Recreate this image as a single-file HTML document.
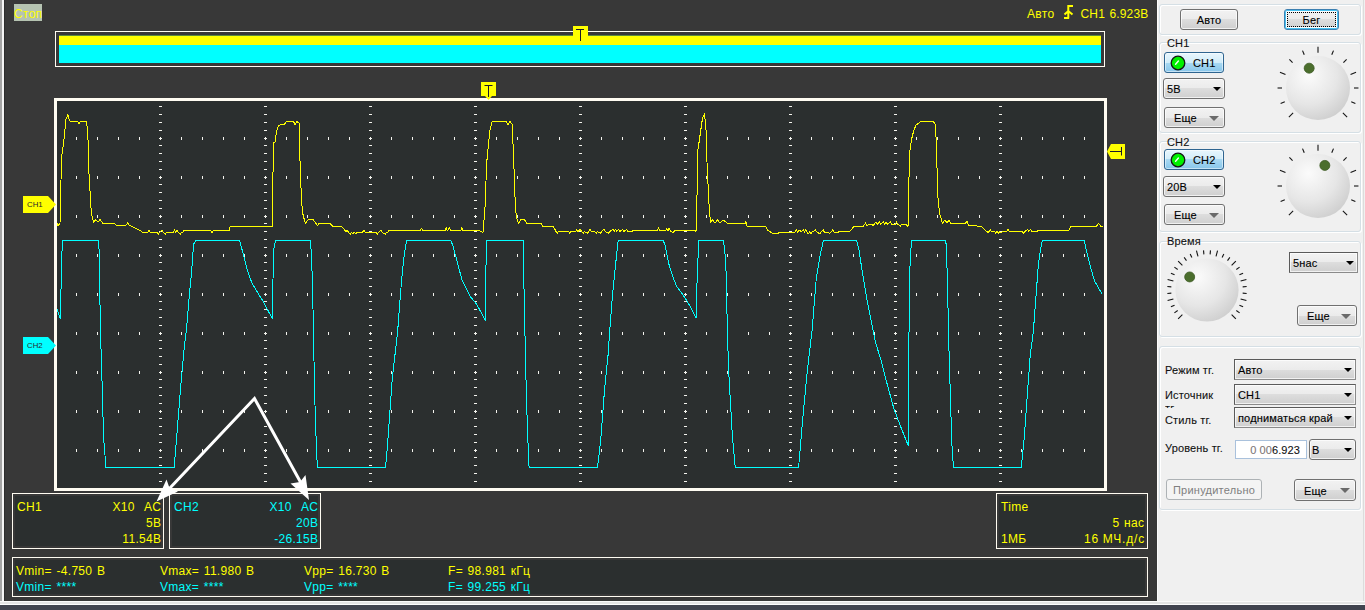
<!DOCTYPE html><html><head><meta charset="utf-8"><style>
*{box-sizing:border-box}
body{margin:0;width:1365px;height:610px;position:relative;overflow:hidden;background:#383838;font-family:"Liberation Sans",sans-serif}
.a{position:absolute}
.t{position:absolute;white-space:nowrap;font-size:12px;line-height:14px;letter-spacing:0.3px;word-spacing:1px}
.box{position:absolute;border:1px solid #fffcf2;background:#383838}
.fill{position:absolute;background:#2b2f2f}
.p{position:absolute;font-size:11px;line-height:13px;color:#111;white-space:nowrap;letter-spacing:0.15px;-webkit-text-stroke:0.1px currentColor}
.grp{position:absolute;border:1px solid #d5dfe5;border-radius:3px;box-shadow:inset 1px 1px 0 #fff, 1px 1px 0 #fff}
.btn{position:absolute;border:1px solid #707070;border-radius:3px;background:linear-gradient(#f2f2f2 0,#ebebeb 50%,#dddddd 50%,#cfcfcf 100%);box-shadow:inset 0 0 0 1px rgba(255,255,255,.7);font-size:11px;color:#000;text-align:center;padding-top:1px;letter-spacing:0.15px;-webkit-text-stroke:0.1px #000}
.cmb{position:absolute;border:1px solid #707070;border-radius:3px;background:linear-gradient(#f2f2f2 0,#ebebeb 50%,#dddddd 50%,#cfcfcf 100%);box-shadow:inset 0 0 0 1px rgba(255,255,255,.7);font-size:11px;color:#000;padding-top:1px;letter-spacing:0.15px;-webkit-text-stroke:0.1px #000}
.arr{position:absolute;width:0;height:0;border-left:4px solid transparent;border-right:4px solid transparent;border-top:4px solid #000}
</style></head><body><div class="a" style="left:0;top:0;width:2px;height:601px;background:#a4a4a4"></div><div class="a" style="left:2px;top:0;width:2px;height:601px;background:#f4f4f4"></div><div class="a" style="left:4px;top:0;width:1px;height:601px;background:#2c2c2c"></div><div class="a" style="left:0;top:601px;width:1365px;height:4px;background:#e4e4e4;border-top:1px solid #fafafa;border-bottom:1px solid #fdfdfd"></div><div class="a" style="left:0;top:605px;width:1365px;height:5px;background:#41444f"></div><div class="a" style="left:14px;top:4px;width:28px;height:17px;background:#b5c3b1"></div><div class="t" style="left:14px;top:7px;color:#ffff00;font-size:12px;">Стоп</div><div class="t" style="left:1027px;top:7px;color:#ffff00;font-size:12px;">Авто</div><div class="t" style="left:1080.5px;top:7px;color:#ffff00;font-size:12px;letter-spacing:0.15px">CH1 6.923В</div><div class="box" style="left:12px;top:493px;width:152px;height:56px"></div><div class="fill" style="left:15px;top:496px;width:146px;height:50px"></div><div class="box" style="left:169px;top:493px;width:152px;height:56px"></div><div class="fill" style="left:172px;top:496px;width:146px;height:50px"></div><div class="box" style="left:996px;top:493px;width:152px;height:56px"></div><div class="fill" style="left:999px;top:496px;width:146px;height:50px"></div><div class="box" style="left:12px;top:557px;width:1136px;height:40px"></div><div class="fill" style="left:15px;top:560px;width:1130px;height:34px"></div><div class="t" style="left:17px;top:500px;color:#ffff00;font-size:12px;">CH1</div><div class="t" style="right:1203.7px;top:500px;color:#ffff00;font-size:12px;text-align:right;">X10&nbsp;&nbsp;AC</div><div class="t" style="right:1203.7px;top:516px;color:#ffff00;font-size:12px;text-align:right;">5В</div><div class="t" style="right:1203.7px;top:532px;color:#ffff00;font-size:12px;text-align:right;">11.54В</div><div class="t" style="left:174px;top:500px;color:#00ffff;font-size:12px;">CH2</div><div class="t" style="right:1046.7px;top:500px;color:#00ffff;font-size:12px;text-align:right;">X10&nbsp;&nbsp;AC</div><div class="t" style="right:1046.7px;top:516px;color:#00ffff;font-size:12px;text-align:right;">20В</div><div class="t" style="right:1046.7px;top:532px;color:#00ffff;font-size:12px;text-align:right;">-26.15В</div><div class="t" style="left:1001px;top:500px;color:#ffff00;font-size:12px;">Time</div><div class="t" style="right:220.70000000000005px;top:516px;color:#ffff00;font-size:12px;text-align:right;">5 нас</div><div class="t" style="left:1001px;top:532px;color:#ffff00;font-size:12px;">1МБ</div><div class="t" style="right:220px;top:532px;color:#ffff00;font-size:12px;text-align:right;letter-spacing:0.8px;word-spacing:-0.5px">16 МЧ.д/с</div><div class="t" style="left:16px;top:564px;color:#ffff00;font-size:12px;">Vmin= -4.750 В</div><div class="t" style="left:160px;top:564px;color:#ffff00;font-size:12px;">Vmax= 11.980 В</div><div class="t" style="left:304px;top:564px;color:#ffff00;font-size:12px;">Vpp= 16.730 В</div><div class="t" style="left:448px;top:564px;color:#ffff00;font-size:12px;">F= 98.981 кГц</div><div class="t" style="left:16px;top:580px;color:#00ffff;font-size:12px;">Vmin= ****</div><div class="t" style="left:160px;top:580px;color:#00ffff;font-size:12px;">Vmax= ****</div><div class="t" style="left:304px;top:580px;color:#00ffff;font-size:12px;">Vpp= ****</div><div class="t" style="left:448px;top:580px;color:#00ffff;font-size:12px;">F= 99.255 кГц</div><svg width="1365" height="610" style="position:absolute;left:0;top:0"><rect x="55.5" y="31.5" width="1049" height="35" fill="none" stroke="#fffcf2" stroke-width="1"/><rect x="59" y="35" width="1042" height="1" fill="#5a8a40"/><rect x="59" y="36" width="1042" height="9" fill="#ffff00"/><rect x="59" y="45" width="1042" height="18" fill="#00ffff"/><rect x="573" y="26" width="15" height="10" fill="#ffff00"/><path d="M576,29.5 H584 M580.5,29.5 V41" stroke="#1a1a2a" stroke-width="1" fill="none"/><rect x="55.5" y="99.5" width="1050" height="390" fill="#2b2f2f" stroke="#fffcf2" stroke-width="3"/><g fill="#f4f4ee" shape-rendering="crispEdges"><rect x="76" y="137" width="1" height="3"/><rect x="97" y="137" width="1" height="3"/><rect x="118" y="137" width="1" height="3"/><rect x="139" y="137" width="1" height="3"/><rect x="181" y="137" width="1" height="3"/><rect x="202" y="137" width="1" height="3"/><rect x="223" y="137" width="1" height="3"/><rect x="244" y="137" width="1" height="3"/><rect x="286" y="137" width="1" height="3"/><rect x="307" y="137" width="1" height="3"/><rect x="328" y="137" width="1" height="3"/><rect x="349" y="137" width="1" height="3"/><rect x="391" y="137" width="1" height="3"/><rect x="412" y="137" width="1" height="3"/><rect x="433" y="137" width="1" height="3"/><rect x="454" y="137" width="1" height="3"/><rect x="496" y="137" width="1" height="3"/><rect x="517" y="137" width="1" height="3"/><rect x="538" y="137" width="1" height="3"/><rect x="559" y="137" width="1" height="3"/><rect x="601" y="137" width="1" height="3"/><rect x="622" y="137" width="1" height="3"/><rect x="643" y="137" width="1" height="3"/><rect x="664" y="137" width="1" height="3"/><rect x="706" y="137" width="1" height="3"/><rect x="727" y="137" width="1" height="3"/><rect x="748" y="137" width="1" height="3"/><rect x="769" y="137" width="1" height="3"/><rect x="811" y="137" width="1" height="3"/><rect x="832" y="137" width="1" height="3"/><rect x="853" y="137" width="1" height="3"/><rect x="874" y="137" width="1" height="3"/><rect x="916" y="137" width="1" height="3"/><rect x="937" y="137" width="1" height="3"/><rect x="958" y="137" width="1" height="3"/><rect x="979" y="137" width="1" height="3"/><rect x="1021" y="137" width="1" height="3"/><rect x="1042" y="137" width="1" height="3"/><rect x="1063" y="137" width="1" height="3"/><rect x="1084" y="137" width="1" height="3"/><rect x="76" y="176" width="1" height="3"/><rect x="97" y="176" width="1" height="3"/><rect x="118" y="176" width="1" height="3"/><rect x="139" y="176" width="1" height="3"/><rect x="181" y="176" width="1" height="3"/><rect x="202" y="176" width="1" height="3"/><rect x="223" y="176" width="1" height="3"/><rect x="244" y="176" width="1" height="3"/><rect x="286" y="176" width="1" height="3"/><rect x="307" y="176" width="1" height="3"/><rect x="328" y="176" width="1" height="3"/><rect x="349" y="176" width="1" height="3"/><rect x="391" y="176" width="1" height="3"/><rect x="412" y="176" width="1" height="3"/><rect x="433" y="176" width="1" height="3"/><rect x="454" y="176" width="1" height="3"/><rect x="496" y="176" width="1" height="3"/><rect x="517" y="176" width="1" height="3"/><rect x="538" y="176" width="1" height="3"/><rect x="559" y="176" width="1" height="3"/><rect x="601" y="176" width="1" height="3"/><rect x="622" y="176" width="1" height="3"/><rect x="643" y="176" width="1" height="3"/><rect x="664" y="176" width="1" height="3"/><rect x="706" y="176" width="1" height="3"/><rect x="727" y="176" width="1" height="3"/><rect x="748" y="176" width="1" height="3"/><rect x="769" y="176" width="1" height="3"/><rect x="811" y="176" width="1" height="3"/><rect x="832" y="176" width="1" height="3"/><rect x="853" y="176" width="1" height="3"/><rect x="874" y="176" width="1" height="3"/><rect x="916" y="176" width="1" height="3"/><rect x="937" y="176" width="1" height="3"/><rect x="958" y="176" width="1" height="3"/><rect x="979" y="176" width="1" height="3"/><rect x="1021" y="176" width="1" height="3"/><rect x="1042" y="176" width="1" height="3"/><rect x="1063" y="176" width="1" height="3"/><rect x="1084" y="176" width="1" height="3"/><rect x="76" y="215" width="1" height="3"/><rect x="97" y="215" width="1" height="3"/><rect x="118" y="215" width="1" height="3"/><rect x="139" y="215" width="1" height="3"/><rect x="181" y="215" width="1" height="3"/><rect x="202" y="215" width="1" height="3"/><rect x="223" y="215" width="1" height="3"/><rect x="244" y="215" width="1" height="3"/><rect x="286" y="215" width="1" height="3"/><rect x="307" y="215" width="1" height="3"/><rect x="328" y="215" width="1" height="3"/><rect x="349" y="215" width="1" height="3"/><rect x="391" y="215" width="1" height="3"/><rect x="412" y="215" width="1" height="3"/><rect x="433" y="215" width="1" height="3"/><rect x="454" y="215" width="1" height="3"/><rect x="496" y="215" width="1" height="3"/><rect x="517" y="215" width="1" height="3"/><rect x="538" y="215" width="1" height="3"/><rect x="559" y="215" width="1" height="3"/><rect x="601" y="215" width="1" height="3"/><rect x="622" y="215" width="1" height="3"/><rect x="643" y="215" width="1" height="3"/><rect x="664" y="215" width="1" height="3"/><rect x="706" y="215" width="1" height="3"/><rect x="727" y="215" width="1" height="3"/><rect x="748" y="215" width="1" height="3"/><rect x="769" y="215" width="1" height="3"/><rect x="811" y="215" width="1" height="3"/><rect x="832" y="215" width="1" height="3"/><rect x="853" y="215" width="1" height="3"/><rect x="874" y="215" width="1" height="3"/><rect x="916" y="215" width="1" height="3"/><rect x="937" y="215" width="1" height="3"/><rect x="958" y="215" width="1" height="3"/><rect x="979" y="215" width="1" height="3"/><rect x="1021" y="215" width="1" height="3"/><rect x="1042" y="215" width="1" height="3"/><rect x="1063" y="215" width="1" height="3"/><rect x="1084" y="215" width="1" height="3"/><rect x="76" y="254" width="1" height="3"/><rect x="97" y="254" width="1" height="3"/><rect x="118" y="254" width="1" height="3"/><rect x="139" y="254" width="1" height="3"/><rect x="181" y="254" width="1" height="3"/><rect x="202" y="254" width="1" height="3"/><rect x="223" y="254" width="1" height="3"/><rect x="244" y="254" width="1" height="3"/><rect x="286" y="254" width="1" height="3"/><rect x="307" y="254" width="1" height="3"/><rect x="328" y="254" width="1" height="3"/><rect x="349" y="254" width="1" height="3"/><rect x="391" y="254" width="1" height="3"/><rect x="412" y="254" width="1" height="3"/><rect x="433" y="254" width="1" height="3"/><rect x="454" y="254" width="1" height="3"/><rect x="496" y="254" width="1" height="3"/><rect x="517" y="254" width="1" height="3"/><rect x="538" y="254" width="1" height="3"/><rect x="559" y="254" width="1" height="3"/><rect x="601" y="254" width="1" height="3"/><rect x="622" y="254" width="1" height="3"/><rect x="643" y="254" width="1" height="3"/><rect x="664" y="254" width="1" height="3"/><rect x="706" y="254" width="1" height="3"/><rect x="727" y="254" width="1" height="3"/><rect x="748" y="254" width="1" height="3"/><rect x="769" y="254" width="1" height="3"/><rect x="811" y="254" width="1" height="3"/><rect x="832" y="254" width="1" height="3"/><rect x="853" y="254" width="1" height="3"/><rect x="874" y="254" width="1" height="3"/><rect x="916" y="254" width="1" height="3"/><rect x="937" y="254" width="1" height="3"/><rect x="958" y="254" width="1" height="3"/><rect x="979" y="254" width="1" height="3"/><rect x="1021" y="254" width="1" height="3"/><rect x="1042" y="254" width="1" height="3"/><rect x="1063" y="254" width="1" height="3"/><rect x="1084" y="254" width="1" height="3"/><rect x="76" y="293" width="1" height="3"/><rect x="97" y="293" width="1" height="3"/><rect x="118" y="293" width="1" height="3"/><rect x="139" y="293" width="1" height="3"/><rect x="181" y="293" width="1" height="3"/><rect x="202" y="293" width="1" height="3"/><rect x="223" y="293" width="1" height="3"/><rect x="244" y="293" width="1" height="3"/><rect x="286" y="293" width="1" height="3"/><rect x="307" y="293" width="1" height="3"/><rect x="328" y="293" width="1" height="3"/><rect x="349" y="293" width="1" height="3"/><rect x="391" y="293" width="1" height="3"/><rect x="412" y="293" width="1" height="3"/><rect x="433" y="293" width="1" height="3"/><rect x="454" y="293" width="1" height="3"/><rect x="496" y="293" width="1" height="3"/><rect x="517" y="293" width="1" height="3"/><rect x="538" y="293" width="1" height="3"/><rect x="559" y="293" width="1" height="3"/><rect x="601" y="293" width="1" height="3"/><rect x="622" y="293" width="1" height="3"/><rect x="643" y="293" width="1" height="3"/><rect x="664" y="293" width="1" height="3"/><rect x="706" y="293" width="1" height="3"/><rect x="727" y="293" width="1" height="3"/><rect x="748" y="293" width="1" height="3"/><rect x="769" y="293" width="1" height="3"/><rect x="811" y="293" width="1" height="3"/><rect x="832" y="293" width="1" height="3"/><rect x="853" y="293" width="1" height="3"/><rect x="874" y="293" width="1" height="3"/><rect x="916" y="293" width="1" height="3"/><rect x="937" y="293" width="1" height="3"/><rect x="958" y="293" width="1" height="3"/><rect x="979" y="293" width="1" height="3"/><rect x="1021" y="293" width="1" height="3"/><rect x="1042" y="293" width="1" height="3"/><rect x="1063" y="293" width="1" height="3"/><rect x="1084" y="293" width="1" height="3"/><rect x="76" y="332" width="1" height="3"/><rect x="97" y="332" width="1" height="3"/><rect x="118" y="332" width="1" height="3"/><rect x="139" y="332" width="1" height="3"/><rect x="181" y="332" width="1" height="3"/><rect x="202" y="332" width="1" height="3"/><rect x="223" y="332" width="1" height="3"/><rect x="244" y="332" width="1" height="3"/><rect x="286" y="332" width="1" height="3"/><rect x="307" y="332" width="1" height="3"/><rect x="328" y="332" width="1" height="3"/><rect x="349" y="332" width="1" height="3"/><rect x="391" y="332" width="1" height="3"/><rect x="412" y="332" width="1" height="3"/><rect x="433" y="332" width="1" height="3"/><rect x="454" y="332" width="1" height="3"/><rect x="496" y="332" width="1" height="3"/><rect x="517" y="332" width="1" height="3"/><rect x="538" y="332" width="1" height="3"/><rect x="559" y="332" width="1" height="3"/><rect x="601" y="332" width="1" height="3"/><rect x="622" y="332" width="1" height="3"/><rect x="643" y="332" width="1" height="3"/><rect x="664" y="332" width="1" height="3"/><rect x="706" y="332" width="1" height="3"/><rect x="727" y="332" width="1" height="3"/><rect x="748" y="332" width="1" height="3"/><rect x="769" y="332" width="1" height="3"/><rect x="811" y="332" width="1" height="3"/><rect x="832" y="332" width="1" height="3"/><rect x="853" y="332" width="1" height="3"/><rect x="874" y="332" width="1" height="3"/><rect x="916" y="332" width="1" height="3"/><rect x="937" y="332" width="1" height="3"/><rect x="958" y="332" width="1" height="3"/><rect x="979" y="332" width="1" height="3"/><rect x="1021" y="332" width="1" height="3"/><rect x="1042" y="332" width="1" height="3"/><rect x="1063" y="332" width="1" height="3"/><rect x="1084" y="332" width="1" height="3"/><rect x="76" y="371" width="1" height="3"/><rect x="97" y="371" width="1" height="3"/><rect x="118" y="371" width="1" height="3"/><rect x="139" y="371" width="1" height="3"/><rect x="181" y="371" width="1" height="3"/><rect x="202" y="371" width="1" height="3"/><rect x="223" y="371" width="1" height="3"/><rect x="244" y="371" width="1" height="3"/><rect x="286" y="371" width="1" height="3"/><rect x="307" y="371" width="1" height="3"/><rect x="328" y="371" width="1" height="3"/><rect x="349" y="371" width="1" height="3"/><rect x="391" y="371" width="1" height="3"/><rect x="412" y="371" width="1" height="3"/><rect x="433" y="371" width="1" height="3"/><rect x="454" y="371" width="1" height="3"/><rect x="496" y="371" width="1" height="3"/><rect x="517" y="371" width="1" height="3"/><rect x="538" y="371" width="1" height="3"/><rect x="559" y="371" width="1" height="3"/><rect x="601" y="371" width="1" height="3"/><rect x="622" y="371" width="1" height="3"/><rect x="643" y="371" width="1" height="3"/><rect x="664" y="371" width="1" height="3"/><rect x="706" y="371" width="1" height="3"/><rect x="727" y="371" width="1" height="3"/><rect x="748" y="371" width="1" height="3"/><rect x="769" y="371" width="1" height="3"/><rect x="811" y="371" width="1" height="3"/><rect x="832" y="371" width="1" height="3"/><rect x="853" y="371" width="1" height="3"/><rect x="874" y="371" width="1" height="3"/><rect x="916" y="371" width="1" height="3"/><rect x="937" y="371" width="1" height="3"/><rect x="958" y="371" width="1" height="3"/><rect x="979" y="371" width="1" height="3"/><rect x="1021" y="371" width="1" height="3"/><rect x="1042" y="371" width="1" height="3"/><rect x="1063" y="371" width="1" height="3"/><rect x="1084" y="371" width="1" height="3"/><rect x="76" y="410" width="1" height="3"/><rect x="97" y="410" width="1" height="3"/><rect x="118" y="410" width="1" height="3"/><rect x="139" y="410" width="1" height="3"/><rect x="181" y="410" width="1" height="3"/><rect x="202" y="410" width="1" height="3"/><rect x="223" y="410" width="1" height="3"/><rect x="244" y="410" width="1" height="3"/><rect x="286" y="410" width="1" height="3"/><rect x="307" y="410" width="1" height="3"/><rect x="328" y="410" width="1" height="3"/><rect x="349" y="410" width="1" height="3"/><rect x="391" y="410" width="1" height="3"/><rect x="412" y="410" width="1" height="3"/><rect x="433" y="410" width="1" height="3"/><rect x="454" y="410" width="1" height="3"/><rect x="496" y="410" width="1" height="3"/><rect x="517" y="410" width="1" height="3"/><rect x="538" y="410" width="1" height="3"/><rect x="559" y="410" width="1" height="3"/><rect x="601" y="410" width="1" height="3"/><rect x="622" y="410" width="1" height="3"/><rect x="643" y="410" width="1" height="3"/><rect x="664" y="410" width="1" height="3"/><rect x="706" y="410" width="1" height="3"/><rect x="727" y="410" width="1" height="3"/><rect x="748" y="410" width="1" height="3"/><rect x="769" y="410" width="1" height="3"/><rect x="811" y="410" width="1" height="3"/><rect x="832" y="410" width="1" height="3"/><rect x="853" y="410" width="1" height="3"/><rect x="874" y="410" width="1" height="3"/><rect x="916" y="410" width="1" height="3"/><rect x="937" y="410" width="1" height="3"/><rect x="958" y="410" width="1" height="3"/><rect x="979" y="410" width="1" height="3"/><rect x="1021" y="410" width="1" height="3"/><rect x="1042" y="410" width="1" height="3"/><rect x="1063" y="410" width="1" height="3"/><rect x="1084" y="410" width="1" height="3"/><rect x="76" y="449" width="1" height="3"/><rect x="97" y="449" width="1" height="3"/><rect x="118" y="449" width="1" height="3"/><rect x="139" y="449" width="1" height="3"/><rect x="181" y="449" width="1" height="3"/><rect x="202" y="449" width="1" height="3"/><rect x="223" y="449" width="1" height="3"/><rect x="244" y="449" width="1" height="3"/><rect x="286" y="449" width="1" height="3"/><rect x="307" y="449" width="1" height="3"/><rect x="328" y="449" width="1" height="3"/><rect x="349" y="449" width="1" height="3"/><rect x="391" y="449" width="1" height="3"/><rect x="412" y="449" width="1" height="3"/><rect x="433" y="449" width="1" height="3"/><rect x="454" y="449" width="1" height="3"/><rect x="496" y="449" width="1" height="3"/><rect x="517" y="449" width="1" height="3"/><rect x="538" y="449" width="1" height="3"/><rect x="559" y="449" width="1" height="3"/><rect x="601" y="449" width="1" height="3"/><rect x="622" y="449" width="1" height="3"/><rect x="643" y="449" width="1" height="3"/><rect x="664" y="449" width="1" height="3"/><rect x="706" y="449" width="1" height="3"/><rect x="727" y="449" width="1" height="3"/><rect x="748" y="449" width="1" height="3"/><rect x="769" y="449" width="1" height="3"/><rect x="811" y="449" width="1" height="3"/><rect x="832" y="449" width="1" height="3"/><rect x="853" y="449" width="1" height="3"/><rect x="874" y="449" width="1" height="3"/><rect x="916" y="449" width="1" height="3"/><rect x="937" y="449" width="1" height="3"/><rect x="958" y="449" width="1" height="3"/><rect x="979" y="449" width="1" height="3"/><rect x="1021" y="449" width="1" height="3"/><rect x="1042" y="449" width="1" height="3"/><rect x="1063" y="449" width="1" height="3"/><rect x="1084" y="449" width="1" height="3"/><rect x="159" y="106" width="3" height="1"/><rect x="159" y="114" width="3" height="1"/><rect x="159" y="122" width="3" height="1"/><rect x="159" y="130" width="3" height="1"/><rect x="159" y="145" width="3" height="1"/><rect x="159" y="153" width="3" height="1"/><rect x="159" y="161" width="3" height="1"/><rect x="159" y="169" width="3" height="1"/><rect x="159" y="184" width="3" height="1"/><rect x="159" y="192" width="3" height="1"/><rect x="159" y="200" width="3" height="1"/><rect x="159" y="208" width="3" height="1"/><rect x="159" y="223" width="3" height="1"/><rect x="159" y="231" width="3" height="1"/><rect x="159" y="239" width="3" height="1"/><rect x="159" y="247" width="3" height="1"/><rect x="159" y="262" width="3" height="1"/><rect x="159" y="270" width="3" height="1"/><rect x="159" y="278" width="3" height="1"/><rect x="159" y="286" width="3" height="1"/><rect x="159" y="301" width="3" height="1"/><rect x="159" y="309" width="3" height="1"/><rect x="159" y="317" width="3" height="1"/><rect x="159" y="325" width="3" height="1"/><rect x="159" y="340" width="3" height="1"/><rect x="159" y="348" width="3" height="1"/><rect x="159" y="356" width="3" height="1"/><rect x="159" y="364" width="3" height="1"/><rect x="159" y="379" width="3" height="1"/><rect x="159" y="387" width="3" height="1"/><rect x="159" y="395" width="3" height="1"/><rect x="159" y="403" width="3" height="1"/><rect x="159" y="418" width="3" height="1"/><rect x="159" y="426" width="3" height="1"/><rect x="159" y="434" width="3" height="1"/><rect x="159" y="442" width="3" height="1"/><rect x="159" y="457" width="3" height="1"/><rect x="159" y="465" width="3" height="1"/><rect x="159" y="473" width="3" height="1"/><rect x="159" y="481" width="3" height="1"/><rect x="264" y="106" width="3" height="1"/><rect x="264" y="114" width="3" height="1"/><rect x="264" y="122" width="3" height="1"/><rect x="264" y="130" width="3" height="1"/><rect x="264" y="145" width="3" height="1"/><rect x="264" y="153" width="3" height="1"/><rect x="264" y="161" width="3" height="1"/><rect x="264" y="169" width="3" height="1"/><rect x="264" y="184" width="3" height="1"/><rect x="264" y="192" width="3" height="1"/><rect x="264" y="200" width="3" height="1"/><rect x="264" y="208" width="3" height="1"/><rect x="264" y="223" width="3" height="1"/><rect x="264" y="231" width="3" height="1"/><rect x="264" y="239" width="3" height="1"/><rect x="264" y="247" width="3" height="1"/><rect x="264" y="262" width="3" height="1"/><rect x="264" y="270" width="3" height="1"/><rect x="264" y="278" width="3" height="1"/><rect x="264" y="286" width="3" height="1"/><rect x="264" y="301" width="3" height="1"/><rect x="264" y="309" width="3" height="1"/><rect x="264" y="317" width="3" height="1"/><rect x="264" y="325" width="3" height="1"/><rect x="264" y="340" width="3" height="1"/><rect x="264" y="348" width="3" height="1"/><rect x="264" y="356" width="3" height="1"/><rect x="264" y="364" width="3" height="1"/><rect x="264" y="379" width="3" height="1"/><rect x="264" y="387" width="3" height="1"/><rect x="264" y="395" width="3" height="1"/><rect x="264" y="403" width="3" height="1"/><rect x="264" y="418" width="3" height="1"/><rect x="264" y="426" width="3" height="1"/><rect x="264" y="434" width="3" height="1"/><rect x="264" y="442" width="3" height="1"/><rect x="264" y="457" width="3" height="1"/><rect x="264" y="465" width="3" height="1"/><rect x="264" y="473" width="3" height="1"/><rect x="264" y="481" width="3" height="1"/><rect x="369" y="106" width="3" height="1"/><rect x="369" y="114" width="3" height="1"/><rect x="369" y="122" width="3" height="1"/><rect x="369" y="130" width="3" height="1"/><rect x="369" y="145" width="3" height="1"/><rect x="369" y="153" width="3" height="1"/><rect x="369" y="161" width="3" height="1"/><rect x="369" y="169" width="3" height="1"/><rect x="369" y="184" width="3" height="1"/><rect x="369" y="192" width="3" height="1"/><rect x="369" y="200" width="3" height="1"/><rect x="369" y="208" width="3" height="1"/><rect x="369" y="223" width="3" height="1"/><rect x="369" y="231" width="3" height="1"/><rect x="369" y="239" width="3" height="1"/><rect x="369" y="247" width="3" height="1"/><rect x="369" y="262" width="3" height="1"/><rect x="369" y="270" width="3" height="1"/><rect x="369" y="278" width="3" height="1"/><rect x="369" y="286" width="3" height="1"/><rect x="369" y="301" width="3" height="1"/><rect x="369" y="309" width="3" height="1"/><rect x="369" y="317" width="3" height="1"/><rect x="369" y="325" width="3" height="1"/><rect x="369" y="340" width="3" height="1"/><rect x="369" y="348" width="3" height="1"/><rect x="369" y="356" width="3" height="1"/><rect x="369" y="364" width="3" height="1"/><rect x="369" y="379" width="3" height="1"/><rect x="369" y="387" width="3" height="1"/><rect x="369" y="395" width="3" height="1"/><rect x="369" y="403" width="3" height="1"/><rect x="369" y="418" width="3" height="1"/><rect x="369" y="426" width="3" height="1"/><rect x="369" y="434" width="3" height="1"/><rect x="369" y="442" width="3" height="1"/><rect x="369" y="457" width="3" height="1"/><rect x="369" y="465" width="3" height="1"/><rect x="369" y="473" width="3" height="1"/><rect x="369" y="481" width="3" height="1"/><rect x="474" y="106" width="3" height="1"/><rect x="474" y="114" width="3" height="1"/><rect x="474" y="122" width="3" height="1"/><rect x="474" y="130" width="3" height="1"/><rect x="474" y="145" width="3" height="1"/><rect x="474" y="153" width="3" height="1"/><rect x="474" y="161" width="3" height="1"/><rect x="474" y="169" width="3" height="1"/><rect x="474" y="184" width="3" height="1"/><rect x="474" y="192" width="3" height="1"/><rect x="474" y="200" width="3" height="1"/><rect x="474" y="208" width="3" height="1"/><rect x="474" y="223" width="3" height="1"/><rect x="474" y="231" width="3" height="1"/><rect x="474" y="239" width="3" height="1"/><rect x="474" y="247" width="3" height="1"/><rect x="474" y="262" width="3" height="1"/><rect x="474" y="270" width="3" height="1"/><rect x="474" y="278" width="3" height="1"/><rect x="474" y="286" width="3" height="1"/><rect x="474" y="301" width="3" height="1"/><rect x="474" y="309" width="3" height="1"/><rect x="474" y="317" width="3" height="1"/><rect x="474" y="325" width="3" height="1"/><rect x="474" y="340" width="3" height="1"/><rect x="474" y="348" width="3" height="1"/><rect x="474" y="356" width="3" height="1"/><rect x="474" y="364" width="3" height="1"/><rect x="474" y="379" width="3" height="1"/><rect x="474" y="387" width="3" height="1"/><rect x="474" y="395" width="3" height="1"/><rect x="474" y="403" width="3" height="1"/><rect x="474" y="418" width="3" height="1"/><rect x="474" y="426" width="3" height="1"/><rect x="474" y="434" width="3" height="1"/><rect x="474" y="442" width="3" height="1"/><rect x="474" y="457" width="3" height="1"/><rect x="474" y="465" width="3" height="1"/><rect x="474" y="473" width="3" height="1"/><rect x="474" y="481" width="3" height="1"/><rect x="579" y="106" width="3" height="1"/><rect x="579" y="114" width="3" height="1"/><rect x="579" y="122" width="3" height="1"/><rect x="579" y="130" width="3" height="1"/><rect x="579" y="145" width="3" height="1"/><rect x="579" y="153" width="3" height="1"/><rect x="579" y="161" width="3" height="1"/><rect x="579" y="169" width="3" height="1"/><rect x="579" y="184" width="3" height="1"/><rect x="579" y="192" width="3" height="1"/><rect x="579" y="200" width="3" height="1"/><rect x="579" y="208" width="3" height="1"/><rect x="579" y="223" width="3" height="1"/><rect x="579" y="231" width="3" height="1"/><rect x="579" y="239" width="3" height="1"/><rect x="579" y="247" width="3" height="1"/><rect x="579" y="262" width="3" height="1"/><rect x="579" y="270" width="3" height="1"/><rect x="579" y="278" width="3" height="1"/><rect x="579" y="286" width="3" height="1"/><rect x="579" y="301" width="3" height="1"/><rect x="579" y="309" width="3" height="1"/><rect x="579" y="317" width="3" height="1"/><rect x="579" y="325" width="3" height="1"/><rect x="579" y="340" width="3" height="1"/><rect x="579" y="348" width="3" height="1"/><rect x="579" y="356" width="3" height="1"/><rect x="579" y="364" width="3" height="1"/><rect x="579" y="379" width="3" height="1"/><rect x="579" y="387" width="3" height="1"/><rect x="579" y="395" width="3" height="1"/><rect x="579" y="403" width="3" height="1"/><rect x="579" y="418" width="3" height="1"/><rect x="579" y="426" width="3" height="1"/><rect x="579" y="434" width="3" height="1"/><rect x="579" y="442" width="3" height="1"/><rect x="579" y="457" width="3" height="1"/><rect x="579" y="465" width="3" height="1"/><rect x="579" y="473" width="3" height="1"/><rect x="579" y="481" width="3" height="1"/><rect x="684" y="106" width="3" height="1"/><rect x="684" y="114" width="3" height="1"/><rect x="684" y="122" width="3" height="1"/><rect x="684" y="130" width="3" height="1"/><rect x="684" y="145" width="3" height="1"/><rect x="684" y="153" width="3" height="1"/><rect x="684" y="161" width="3" height="1"/><rect x="684" y="169" width="3" height="1"/><rect x="684" y="184" width="3" height="1"/><rect x="684" y="192" width="3" height="1"/><rect x="684" y="200" width="3" height="1"/><rect x="684" y="208" width="3" height="1"/><rect x="684" y="223" width="3" height="1"/><rect x="684" y="231" width="3" height="1"/><rect x="684" y="239" width="3" height="1"/><rect x="684" y="247" width="3" height="1"/><rect x="684" y="262" width="3" height="1"/><rect x="684" y="270" width="3" height="1"/><rect x="684" y="278" width="3" height="1"/><rect x="684" y="286" width="3" height="1"/><rect x="684" y="301" width="3" height="1"/><rect x="684" y="309" width="3" height="1"/><rect x="684" y="317" width="3" height="1"/><rect x="684" y="325" width="3" height="1"/><rect x="684" y="340" width="3" height="1"/><rect x="684" y="348" width="3" height="1"/><rect x="684" y="356" width="3" height="1"/><rect x="684" y="364" width="3" height="1"/><rect x="684" y="379" width="3" height="1"/><rect x="684" y="387" width="3" height="1"/><rect x="684" y="395" width="3" height="1"/><rect x="684" y="403" width="3" height="1"/><rect x="684" y="418" width="3" height="1"/><rect x="684" y="426" width="3" height="1"/><rect x="684" y="434" width="3" height="1"/><rect x="684" y="442" width="3" height="1"/><rect x="684" y="457" width="3" height="1"/><rect x="684" y="465" width="3" height="1"/><rect x="684" y="473" width="3" height="1"/><rect x="684" y="481" width="3" height="1"/><rect x="789" y="106" width="3" height="1"/><rect x="789" y="114" width="3" height="1"/><rect x="789" y="122" width="3" height="1"/><rect x="789" y="130" width="3" height="1"/><rect x="789" y="145" width="3" height="1"/><rect x="789" y="153" width="3" height="1"/><rect x="789" y="161" width="3" height="1"/><rect x="789" y="169" width="3" height="1"/><rect x="789" y="184" width="3" height="1"/><rect x="789" y="192" width="3" height="1"/><rect x="789" y="200" width="3" height="1"/><rect x="789" y="208" width="3" height="1"/><rect x="789" y="223" width="3" height="1"/><rect x="789" y="231" width="3" height="1"/><rect x="789" y="239" width="3" height="1"/><rect x="789" y="247" width="3" height="1"/><rect x="789" y="262" width="3" height="1"/><rect x="789" y="270" width="3" height="1"/><rect x="789" y="278" width="3" height="1"/><rect x="789" y="286" width="3" height="1"/><rect x="789" y="301" width="3" height="1"/><rect x="789" y="309" width="3" height="1"/><rect x="789" y="317" width="3" height="1"/><rect x="789" y="325" width="3" height="1"/><rect x="789" y="340" width="3" height="1"/><rect x="789" y="348" width="3" height="1"/><rect x="789" y="356" width="3" height="1"/><rect x="789" y="364" width="3" height="1"/><rect x="789" y="379" width="3" height="1"/><rect x="789" y="387" width="3" height="1"/><rect x="789" y="395" width="3" height="1"/><rect x="789" y="403" width="3" height="1"/><rect x="789" y="418" width="3" height="1"/><rect x="789" y="426" width="3" height="1"/><rect x="789" y="434" width="3" height="1"/><rect x="789" y="442" width="3" height="1"/><rect x="789" y="457" width="3" height="1"/><rect x="789" y="465" width="3" height="1"/><rect x="789" y="473" width="3" height="1"/><rect x="789" y="481" width="3" height="1"/><rect x="894" y="106" width="3" height="1"/><rect x="894" y="114" width="3" height="1"/><rect x="894" y="122" width="3" height="1"/><rect x="894" y="130" width="3" height="1"/><rect x="894" y="145" width="3" height="1"/><rect x="894" y="153" width="3" height="1"/><rect x="894" y="161" width="3" height="1"/><rect x="894" y="169" width="3" height="1"/><rect x="894" y="184" width="3" height="1"/><rect x="894" y="192" width="3" height="1"/><rect x="894" y="200" width="3" height="1"/><rect x="894" y="208" width="3" height="1"/><rect x="894" y="223" width="3" height="1"/><rect x="894" y="231" width="3" height="1"/><rect x="894" y="239" width="3" height="1"/><rect x="894" y="247" width="3" height="1"/><rect x="894" y="262" width="3" height="1"/><rect x="894" y="270" width="3" height="1"/><rect x="894" y="278" width="3" height="1"/><rect x="894" y="286" width="3" height="1"/><rect x="894" y="301" width="3" height="1"/><rect x="894" y="309" width="3" height="1"/><rect x="894" y="317" width="3" height="1"/><rect x="894" y="325" width="3" height="1"/><rect x="894" y="340" width="3" height="1"/><rect x="894" y="348" width="3" height="1"/><rect x="894" y="356" width="3" height="1"/><rect x="894" y="364" width="3" height="1"/><rect x="894" y="379" width="3" height="1"/><rect x="894" y="387" width="3" height="1"/><rect x="894" y="395" width="3" height="1"/><rect x="894" y="403" width="3" height="1"/><rect x="894" y="418" width="3" height="1"/><rect x="894" y="426" width="3" height="1"/><rect x="894" y="434" width="3" height="1"/><rect x="894" y="442" width="3" height="1"/><rect x="894" y="457" width="3" height="1"/><rect x="894" y="465" width="3" height="1"/><rect x="894" y="473" width="3" height="1"/><rect x="894" y="481" width="3" height="1"/><rect x="999" y="106" width="3" height="1"/><rect x="999" y="114" width="3" height="1"/><rect x="999" y="122" width="3" height="1"/><rect x="999" y="130" width="3" height="1"/><rect x="999" y="145" width="3" height="1"/><rect x="999" y="153" width="3" height="1"/><rect x="999" y="161" width="3" height="1"/><rect x="999" y="169" width="3" height="1"/><rect x="999" y="184" width="3" height="1"/><rect x="999" y="192" width="3" height="1"/><rect x="999" y="200" width="3" height="1"/><rect x="999" y="208" width="3" height="1"/><rect x="999" y="223" width="3" height="1"/><rect x="999" y="231" width="3" height="1"/><rect x="999" y="239" width="3" height="1"/><rect x="999" y="247" width="3" height="1"/><rect x="999" y="262" width="3" height="1"/><rect x="999" y="270" width="3" height="1"/><rect x="999" y="278" width="3" height="1"/><rect x="999" y="286" width="3" height="1"/><rect x="999" y="301" width="3" height="1"/><rect x="999" y="309" width="3" height="1"/><rect x="999" y="317" width="3" height="1"/><rect x="999" y="325" width="3" height="1"/><rect x="999" y="340" width="3" height="1"/><rect x="999" y="348" width="3" height="1"/><rect x="999" y="356" width="3" height="1"/><rect x="999" y="364" width="3" height="1"/><rect x="999" y="379" width="3" height="1"/><rect x="999" y="387" width="3" height="1"/><rect x="999" y="395" width="3" height="1"/><rect x="999" y="403" width="3" height="1"/><rect x="999" y="418" width="3" height="1"/><rect x="999" y="426" width="3" height="1"/><rect x="999" y="434" width="3" height="1"/><rect x="999" y="442" width="3" height="1"/><rect x="999" y="457" width="3" height="1"/><rect x="999" y="465" width="3" height="1"/><rect x="999" y="473" width="3" height="1"/><rect x="999" y="481" width="3" height="1"/><rect x="159" y="138" width="3" height="1"/><rect x="160" y="137" width="1" height="3"/><rect x="159" y="177" width="3" height="1"/><rect x="160" y="176" width="1" height="3"/><rect x="159" y="216" width="3" height="1"/><rect x="160" y="215" width="1" height="3"/><rect x="159" y="255" width="3" height="1"/><rect x="160" y="254" width="1" height="3"/><rect x="159" y="294" width="3" height="1"/><rect x="160" y="293" width="1" height="3"/><rect x="159" y="333" width="3" height="1"/><rect x="160" y="332" width="1" height="3"/><rect x="159" y="372" width="3" height="1"/><rect x="160" y="371" width="1" height="3"/><rect x="159" y="411" width="3" height="1"/><rect x="160" y="410" width="1" height="3"/><rect x="159" y="450" width="3" height="1"/><rect x="160" y="449" width="1" height="3"/><rect x="264" y="138" width="3" height="1"/><rect x="265" y="137" width="1" height="3"/><rect x="264" y="177" width="3" height="1"/><rect x="265" y="176" width="1" height="3"/><rect x="264" y="216" width="3" height="1"/><rect x="265" y="215" width="1" height="3"/><rect x="264" y="255" width="3" height="1"/><rect x="265" y="254" width="1" height="3"/><rect x="264" y="294" width="3" height="1"/><rect x="265" y="293" width="1" height="3"/><rect x="264" y="333" width="3" height="1"/><rect x="265" y="332" width="1" height="3"/><rect x="264" y="372" width="3" height="1"/><rect x="265" y="371" width="1" height="3"/><rect x="264" y="411" width="3" height="1"/><rect x="265" y="410" width="1" height="3"/><rect x="264" y="450" width="3" height="1"/><rect x="265" y="449" width="1" height="3"/><rect x="369" y="138" width="3" height="1"/><rect x="370" y="137" width="1" height="3"/><rect x="369" y="177" width="3" height="1"/><rect x="370" y="176" width="1" height="3"/><rect x="369" y="216" width="3" height="1"/><rect x="370" y="215" width="1" height="3"/><rect x="369" y="255" width="3" height="1"/><rect x="370" y="254" width="1" height="3"/><rect x="369" y="294" width="3" height="1"/><rect x="370" y="293" width="1" height="3"/><rect x="369" y="333" width="3" height="1"/><rect x="370" y="332" width="1" height="3"/><rect x="369" y="372" width="3" height="1"/><rect x="370" y="371" width="1" height="3"/><rect x="369" y="411" width="3" height="1"/><rect x="370" y="410" width="1" height="3"/><rect x="369" y="450" width="3" height="1"/><rect x="370" y="449" width="1" height="3"/><rect x="474" y="138" width="3" height="1"/><rect x="475" y="137" width="1" height="3"/><rect x="474" y="177" width="3" height="1"/><rect x="475" y="176" width="1" height="3"/><rect x="474" y="216" width="3" height="1"/><rect x="475" y="215" width="1" height="3"/><rect x="474" y="255" width="3" height="1"/><rect x="475" y="254" width="1" height="3"/><rect x="474" y="294" width="3" height="1"/><rect x="475" y="293" width="1" height="3"/><rect x="474" y="333" width="3" height="1"/><rect x="475" y="332" width="1" height="3"/><rect x="474" y="372" width="3" height="1"/><rect x="475" y="371" width="1" height="3"/><rect x="474" y="411" width="3" height="1"/><rect x="475" y="410" width="1" height="3"/><rect x="474" y="450" width="3" height="1"/><rect x="475" y="449" width="1" height="3"/><rect x="579" y="138" width="3" height="1"/><rect x="580" y="137" width="1" height="3"/><rect x="579" y="177" width="3" height="1"/><rect x="580" y="176" width="1" height="3"/><rect x="579" y="216" width="3" height="1"/><rect x="580" y="215" width="1" height="3"/><rect x="579" y="255" width="3" height="1"/><rect x="580" y="254" width="1" height="3"/><rect x="579" y="294" width="3" height="1"/><rect x="580" y="293" width="1" height="3"/><rect x="579" y="333" width="3" height="1"/><rect x="580" y="332" width="1" height="3"/><rect x="579" y="372" width="3" height="1"/><rect x="580" y="371" width="1" height="3"/><rect x="579" y="411" width="3" height="1"/><rect x="580" y="410" width="1" height="3"/><rect x="579" y="450" width="3" height="1"/><rect x="580" y="449" width="1" height="3"/><rect x="684" y="138" width="3" height="1"/><rect x="685" y="137" width="1" height="3"/><rect x="684" y="177" width="3" height="1"/><rect x="685" y="176" width="1" height="3"/><rect x="684" y="216" width="3" height="1"/><rect x="685" y="215" width="1" height="3"/><rect x="684" y="255" width="3" height="1"/><rect x="685" y="254" width="1" height="3"/><rect x="684" y="294" width="3" height="1"/><rect x="685" y="293" width="1" height="3"/><rect x="684" y="333" width="3" height="1"/><rect x="685" y="332" width="1" height="3"/><rect x="684" y="372" width="3" height="1"/><rect x="685" y="371" width="1" height="3"/><rect x="684" y="411" width="3" height="1"/><rect x="685" y="410" width="1" height="3"/><rect x="684" y="450" width="3" height="1"/><rect x="685" y="449" width="1" height="3"/><rect x="789" y="138" width="3" height="1"/><rect x="790" y="137" width="1" height="3"/><rect x="789" y="177" width="3" height="1"/><rect x="790" y="176" width="1" height="3"/><rect x="789" y="216" width="3" height="1"/><rect x="790" y="215" width="1" height="3"/><rect x="789" y="255" width="3" height="1"/><rect x="790" y="254" width="1" height="3"/><rect x="789" y="294" width="3" height="1"/><rect x="790" y="293" width="1" height="3"/><rect x="789" y="333" width="3" height="1"/><rect x="790" y="332" width="1" height="3"/><rect x="789" y="372" width="3" height="1"/><rect x="790" y="371" width="1" height="3"/><rect x="789" y="411" width="3" height="1"/><rect x="790" y="410" width="1" height="3"/><rect x="789" y="450" width="3" height="1"/><rect x="790" y="449" width="1" height="3"/><rect x="894" y="138" width="3" height="1"/><rect x="895" y="137" width="1" height="3"/><rect x="894" y="177" width="3" height="1"/><rect x="895" y="176" width="1" height="3"/><rect x="894" y="216" width="3" height="1"/><rect x="895" y="215" width="1" height="3"/><rect x="894" y="255" width="3" height="1"/><rect x="895" y="254" width="1" height="3"/><rect x="894" y="294" width="3" height="1"/><rect x="895" y="293" width="1" height="3"/><rect x="894" y="333" width="3" height="1"/><rect x="895" y="332" width="1" height="3"/><rect x="894" y="372" width="3" height="1"/><rect x="895" y="371" width="1" height="3"/><rect x="894" y="411" width="3" height="1"/><rect x="895" y="410" width="1" height="3"/><rect x="894" y="450" width="3" height="1"/><rect x="895" y="449" width="1" height="3"/><rect x="999" y="138" width="3" height="1"/><rect x="1000" y="137" width="1" height="3"/><rect x="999" y="177" width="3" height="1"/><rect x="1000" y="176" width="1" height="3"/><rect x="999" y="216" width="3" height="1"/><rect x="1000" y="215" width="1" height="3"/><rect x="999" y="255" width="3" height="1"/><rect x="1000" y="254" width="1" height="3"/><rect x="999" y="294" width="3" height="1"/><rect x="1000" y="293" width="1" height="3"/><rect x="999" y="333" width="3" height="1"/><rect x="1000" y="332" width="1" height="3"/><rect x="999" y="372" width="3" height="1"/><rect x="1000" y="371" width="1" height="3"/><rect x="999" y="411" width="3" height="1"/><rect x="1000" y="410" width="1" height="3"/><rect x="999" y="450" width="3" height="1"/><rect x="1000" y="449" width="1" height="3"/></g><polyline points="57.0,309.0 60.3,319.2 61.3,276.1 62.3,240.5 98.6,240.5 99.2,252.5 100.4,330.0 101.6,366.9 103.6,438.2 106.0,467.5 174.1,467.5 176.6,438.2 180.3,391.5 184.0,349.7 186.4,330.0 189.5,293.5 191.5,273.0 193.6,244.3 195.6,240.5 239.7,240.5 242.8,252.5 246.9,268.9 252.0,283.3 255.1,288.4 263.3,301.7 272.6,319.2 273.0,279.2 273.6,250.5 275.6,240.5 310.4,240.5 311.3,252.5 312.3,279.2 313.5,330.0 314.3,379.2 315.5,423.4 317.3,467.5 385.5,467.5 387.3,448.0 392.2,379.2 397.6,332.0 400.5,293.5 402.6,268.9 404.6,252.5 406.7,240.5 450.8,240.5 452.8,245.3 458.0,264.8 462.0,280.2 470.3,296.6 476.4,303.8 482.6,315.1 485.6,320.6 485.6,280.2 486.7,240.5 523.2,240.5 523.6,268.9 524.9,330.0 525.7,369.3 527.4,428.3 529.1,467.5 597.5,467.5 600.7,440.6 604.4,391.5 608.1,354.6 609.8,330.0 612.1,299.7 615.1,268.9 618.2,240.5 663.3,240.5 665.4,246.4 668.5,262.8 672.6,276.1 676.7,286.4 684.9,297.6 691.0,307.9 696.2,318.2 697.2,275.1 698.8,240.5 723.4,240.5 724.9,252.5 726.3,275.1 727.3,330.0 728.6,369.3 732.2,433.2 735.2,467.5 798.6,467.5 802.3,423.4 807.2,371.8 812.1,330.0 816.2,279.2 820.3,254.6 823.3,240.5 856.7,240.5 858.7,248.4 862.8,275.1 866.9,299.7 873.0,330.0 875.5,342.3 881.6,362.0 886.5,381.6 893.9,408.7 901.3,428.3 908.2,445.5 908.7,364.4 909.6,273.0 911.0,248.4 911.6,240.5 945.5,240.5 946.5,246.4 947.3,279.2 948.6,332.0 949.2,359.5 950.5,398.8 951.7,440.6 953.4,467.5 1021.3,467.5 1024.2,438.2 1027.9,386.5 1030.3,354.6 1033.3,332.0 1036.2,293.5 1038.2,266.9 1040.3,250.5 1042.3,240.5 1084.4,240.5 1086.4,250.5 1090.5,266.9 1094.6,281.2 1101.8,293.5" fill="none" stroke="#00ffff" stroke-width="1" shape-rendering="crispEdges"/><polyline points="57.0,223.0 58.0,226.0 60.0,223.0 61.5,158.0 64.0,139.5 66.0,119.0 68.0,114.6 69.5,121.0 77.6,121.5 79.0,124.0 80.5,121.5 83.3,121.0 86.7,121.5 88.0,139.5 89.0,174.0 91.3,213.0 93.6,222.0 95.9,219.8 98.0,222.0 100.0,219.5 102.8,223.3 114.3,223.3 116.6,225.6 125.8,225.6 127.5,223.0 129.5,225.6 132.7,226.7 137.3,229.0 141.9,231.3 142.0,232.3 147.8,232.3 149.0,230.1 150.2,232.3 157.1,232.3 158.3,234.1 159.5,232.3 162.0,230.1 163.2,232.3 165.4,234.1 166.6,232.3 173.4,232.3 174.6,230.1 175.8,232.3 177.1,230.1 178.3,232.3 180.2,234.1 181.4,232.3 183.0,232.3 183.2,230.9 210.8,230.9 212.0,232.5 213.0,230.9 229.2,230.2 230.3,226.3 272.4,226.3 272.8,184.2 273.5,142.9 275.1,141.7 276.3,132.6 278.6,125.2 284.3,124.5 286.6,121.5 293.5,121.5 295.0,124.5 296.9,121.5 299.2,123.4 299.9,157.8 301.5,201.5 303.1,215.2 305.4,223.3 308.4,219.4 313.0,219.4 317.6,225.6 318.8,223.3 330.2,223.3 332.5,226.3 341.7,226.3 345.2,230.9 346.0,232.3 347.2,230.1 348.4,232.3 350.4,234.1 351.6,232.3 353.0,234.1 354.2,232.3 355.9,234.1 357.1,232.3 362.6,232.3 363.8,230.1 365.0,232.3 371.0,232.3 376.0,232.3 377.2,234.1 378.4,232.3 380.9,230.1 382.1,232.3 385.2,234.1 386.4,232.3 388.0,232.3 388.8,230.2 420.0,230.6 421.5,228.5 423.0,230.6 445.0,230.6 445.0,230.6 446.2,228.0 447.4,230.6 449.5,228.0 450.7,230.6 457.0,230.6 460.6,230.6 461.8,228.0 463.0,230.6 466.0,230.6 466.0,230.6 480.0,230.9 483.0,232.5 485.3,203.8 486.5,164.7 488.3,146.3 489.9,130.3 492.2,121.5 506.0,121.5 508.0,124.5 509.9,121.5 512.2,124.5 513.6,157.8 515.2,201.5 516.3,217.5 518.6,223.3 520.9,219.4 524.4,219.4 526.7,223.3 541.6,224.0 542.7,226.3 553.1,226.3 555.4,230.2 556.0,231.5 557.2,233.3 558.4,231.5 565.4,231.5 568.5,231.5 569.7,233.3 570.9,231.5 575.6,231.5 576.8,229.3 578.0,231.5 580.4,229.3 581.6,231.5 583.3,233.3 584.5,231.5 587.4,233.3 588.6,231.5 590.1,229.3 591.3,231.5 594.9,231.5 596.1,233.3 597.3,231.5 600.4,233.3 601.6,231.5 604.0,229.3 605.2,231.5 608.5,233.3 609.7,231.5 612.9,229.3 614.1,231.5 615.6,229.3 616.8,231.5 618.7,229.3 619.9,231.5 622.6,229.3 623.8,231.5 626.8,229.3 628.0,231.5 632.0,231.5 632.0,230.9 657.0,230.9 658.5,228.0 660.0,230.9 660.0,230.9 665.5,230.9 666.7,228.3 667.9,230.9 669.1,228.3 670.3,230.9 673.1,233.0 674.3,230.9 677.0,230.9 678.0,230.9 695.5,230.9 696.0,232.0 697.1,192.3 697.8,150.9 700.1,134.9 702.4,118.8 704.2,114.6 705.8,123.4 707.0,162.4 708.8,201.5 710.4,222.1 712.5,219.8 715.0,223.0 717.5,219.8 720.0,223.0 723.0,219.8 727.7,223.3 745.0,223.5 746.0,221.5 747.2,226.3 765.6,226.3 767.9,230.2 772.5,233.2 794.3,232.5 795.0,232.0 796.2,229.8 797.4,232.0 800.0,229.8 801.2,232.0 803.2,229.8 804.4,232.0 805.7,229.8 806.9,232.0 808.3,233.8 809.5,232.0 811.0,233.8 812.2,232.0 815.5,229.8 816.7,232.0 820.0,233.8 821.2,232.0 823.1,229.8 824.3,232.0 828.5,232.0 829.7,233.8 830.9,232.0 832.9,229.8 834.1,232.0 838.0,232.0 838.0,231.3 850.0,231.3 851.7,229.2 854.0,226.3 863.2,226.3 865.5,223.3 866.0,224.2 867.2,226.0 868.4,224.2 871.9,224.2 873.1,226.0 874.3,224.2 876.0,222.0 877.2,224.2 879.4,222.0 880.6,224.2 883.6,222.0 884.8,224.2 886.1,222.0 887.3,224.2 890.4,222.0 891.6,224.2 895.4,224.2 896.6,222.0 897.8,224.2 900.5,226.0 901.7,224.2 905.0,224.2 906.0,224.4 908.0,226.3 908.7,190.0 909.6,153.2 911.5,139.5 913.8,130.3 916.1,125.2 920.7,121.5 933.3,121.5 935.6,124.5 936.7,157.8 937.9,196.9 939.5,213.0 942.5,223.3 945.0,219.8 947.0,223.0 949.0,219.8 950.5,223.3 965.5,223.3 967.0,221.5 968.5,225.5 981.5,226.3 985.0,230.2 988.4,232.5 989.0,231.5 990.2,229.3 991.4,231.5 994.7,231.5 995.9,233.3 997.1,231.5 998.5,233.3 999.7,231.5 1001.0,233.3 1002.2,231.5 1006.7,231.5 1007.9,229.3 1009.1,231.5 1014.9,231.5 1019.1,231.5 1022.4,231.5 1023.6,233.3 1024.8,231.5 1027.6,229.3 1028.8,231.5 1030.6,229.3 1031.8,231.5 1037.0,231.5 1037.8,230.2 1068.9,230.2 1071.2,226.3 1096.5,226.3 1098.5,223.5 1101.0,226.3 1103.0,226.3" fill="none" stroke="#ffff00" stroke-width="1" shape-rendering="crispEdges"/><path d="M481,82 H496 V96 L492,96 L488.5,100 L485,96 L481,96 Z" fill="#ffff00"/><path d="M484.5,85.5 H492.5 M488.5,85.5 V97" stroke="#1a1a2a" stroke-width="1" fill="none"/><path d="M23,196 H48 L56,204.5 L48,213 H23 Z" fill="#ffff00"/><path d="M23,337 H48 L56,345.5 L48,354 H23 Z" fill="#00ffff"/><text x="27" y="207" font-family="Liberation Sans" font-size="7.8" fill="#2a2a2a">CH1</text><text x="27" y="348" font-family="Liberation Sans" font-size="7.8" fill="#2a2a2a">CH2</text><path d="M1107,151.5 L1111,144 H1125 V159 H1111 Z" fill="#ffff00"/><path d="M1110,151.5 H1121 M1121.5,147 V155.5" stroke="#1a1a2a" stroke-width="1" fill="none"/><path d="M169,489 L254.5,398.5 L301,483" stroke="#ffffff" stroke-width="3" fill="none" stroke-linejoin="miter"/><path d="M156.5,501.5 L166.5,479.5 L169.5,488 L178,491.5 Z" fill="#ffffff"/><path d="M309,500 L290.5,483.5 L300,482 L305.5,475 Z" fill="#ffffff"/><path d="M1068.3,18.5 V6 H1073 M1064,18 H1069 M1064.5,14.5 L1068.3,11 L1072.5,14.5" stroke="#ffff00" stroke-width="2" fill="none"/></svg><div class="a" style="left:1157px;top:0;width:208px;height:601px;background:#f0f0f0;border-left:1px solid #fcfcfc"></div><div class="a" style="left:1363px;top:0;width:1px;height:601px;background:#dcdcdc"></div><div class="grp" style="left:1159px;top:4px;width:202px;height:31px"></div><div class="btn" style="left:1180px;top:9px;width:58px;height:21px;line-height:19px;">Авто</div><div class="btn" style="left:1284px;top:9px;width:55px;height:21px;line-height:19px;border-color:#3c7fb1;box-shadow:inset 0 0 0 1px #48c1f0, inset 0 0 0 2px #fff;outline:1px dotted #000;outline-offset:-4px">Бег</div><div class="grp" style="left:1159px;top:42px;width:202px;height:91px"></div><div class="p" style="left:1167px;top:37px">CH1</div><div class="a" style="left:1164px;top:52px;width:60px;height:21px;border:1px solid #2f6590;border-radius:3px;background:linear-gradient(#e8f6fd 0,#d0ecf9 50%,#a9d9f2 50%,#88c6ea 100%);box-shadow:inset 0 0 0 1px rgba(255,255,255,.5)"></div><svg class="a" style="left:1168.5px;top:53.5px" width="18" height="18"><circle cx="9" cy="9" r="6.8" fill="#00f000" stroke="#141414" stroke-width="1.3"/><path d="M6.6,10.2 L9.4,7" stroke="#f4fff4" stroke-width="1.4" stroke-linecap="round"/></svg><div class="p" style="left:1193px;top:57px;color:#000">CH1</div><div class="cmb" style="left:1163px;top:78px;width:62px;height:21px;line-height:19px;padding-left:3px;">5В</div><div class="arr" style="left:1213px;top:87px"></div><div class="btn" style="left:1164px;top:107px;width:61px;height:21px;line-height:19px;text-align:left;padding-left:9px">Еще</div><div class="arr" style="left:1209px;top:116px;border-top-color:#6a6a6a;border-left-width:5px;border-right-width:5px;border-top-width:5px"></div><svg class="a" style="left:1272.5px;top:42.5px" width="90" height="90"><defs><radialGradient id="kg87" cx="35%" cy="30%" r="75%"><stop offset="0" stop-color="#fbfbfb"/><stop offset="0.6" stop-color="#e6e6e6"/><stop offset="1" stop-color="#cfcfcf"/></radialGradient></defs><line x1="69.89" y1="69.89" x2="74.13" y2="74.13" stroke="#141414" stroke-width="1.1"/><line x1="78.21" y1="58.76" x2="82.37" y2="60.48" stroke="#141414" stroke-width="1.1"/><line x1="80.95" y1="45.00" x2="85.45" y2="45.00" stroke="#141414" stroke-width="1.1"/><line x1="77.52" y1="31.53" x2="83.06" y2="29.23" stroke="#141414" stroke-width="1.1"/><line x1="70.42" y1="19.58" x2="73.60" y2="16.40" stroke="#141414" stroke-width="1.1"/><line x1="58.76" y1="11.79" x2="60.48" y2="7.63" stroke="#141414" stroke-width="1.1"/><line x1="45.00" y1="9.80" x2="45.00" y2="3.80" stroke="#141414" stroke-width="1.1"/><line x1="31.24" y1="11.79" x2="29.52" y2="7.63" stroke="#141414" stroke-width="1.1"/><line x1="19.58" y1="19.58" x2="16.40" y2="16.40" stroke="#141414" stroke-width="1.1"/><line x1="12.48" y1="31.53" x2="6.94" y2="29.23" stroke="#141414" stroke-width="1.1"/><line x1="9.05" y1="45.00" x2="4.55" y2="45.00" stroke="#141414" stroke-width="1.1"/><line x1="11.79" y1="58.76" x2="7.63" y2="60.48" stroke="#141414" stroke-width="1.1"/><line x1="20.11" y1="69.89" x2="15.87" y2="74.13" stroke="#141414" stroke-width="1.1"/><circle cx="45" cy="45" r="32" fill="url(#kg87)"/><circle cx="36.17" cy="25.18" r="5" fill="#4b6e2d" stroke="#3f5c26" stroke-width="0.8"/></svg><div class="grp" style="left:1159px;top:141px;width:202px;height:91px"></div><div class="p" style="left:1167px;top:136px">CH2</div><div class="a" style="left:1164px;top:149px;width:60px;height:21px;border:1px solid #2f6590;border-radius:3px;background:linear-gradient(#e8f6fd 0,#d0ecf9 50%,#a9d9f2 50%,#88c6ea 100%);box-shadow:inset 0 0 0 1px rgba(255,255,255,.5)"></div><svg class="a" style="left:1168.5px;top:150.5px" width="18" height="18"><circle cx="9" cy="9" r="6.8" fill="#00f000" stroke="#141414" stroke-width="1.3"/><path d="M6.6,10.2 L9.4,7" stroke="#f4fff4" stroke-width="1.4" stroke-linecap="round"/></svg><div class="p" style="left:1193px;top:154px;color:#000">CH2</div><div class="cmb" style="left:1163px;top:176px;width:62px;height:21px;line-height:19px;padding-left:3px;">20В</div><div class="arr" style="left:1213px;top:185px"></div><div class="btn" style="left:1164px;top:204px;width:61px;height:21px;line-height:19px;text-align:left;padding-left:9px">Еще</div><div class="arr" style="left:1209px;top:213px;border-top-color:#6a6a6a;border-left-width:5px;border-right-width:5px;border-top-width:5px"></div><svg class="a" style="left:1272.7px;top:140.8px" width="90" height="90"><defs><radialGradient id="kg185" cx="35%" cy="30%" r="75%"><stop offset="0" stop-color="#fbfbfb"/><stop offset="0.6" stop-color="#e6e6e6"/><stop offset="1" stop-color="#cfcfcf"/></radialGradient></defs><line x1="69.89" y1="69.89" x2="74.13" y2="74.13" stroke="#141414" stroke-width="1.1"/><line x1="78.21" y1="58.76" x2="82.37" y2="60.48" stroke="#141414" stroke-width="1.1"/><line x1="80.95" y1="45.00" x2="85.45" y2="45.00" stroke="#141414" stroke-width="1.1"/><line x1="77.52" y1="31.53" x2="83.06" y2="29.23" stroke="#141414" stroke-width="1.1"/><line x1="70.42" y1="19.58" x2="73.60" y2="16.40" stroke="#141414" stroke-width="1.1"/><line x1="58.76" y1="11.79" x2="60.48" y2="7.63" stroke="#141414" stroke-width="1.1"/><line x1="45.00" y1="9.80" x2="45.00" y2="3.80" stroke="#141414" stroke-width="1.1"/><line x1="31.24" y1="11.79" x2="29.52" y2="7.63" stroke="#141414" stroke-width="1.1"/><line x1="19.58" y1="19.58" x2="16.40" y2="16.40" stroke="#141414" stroke-width="1.1"/><line x1="12.48" y1="31.53" x2="6.94" y2="29.23" stroke="#141414" stroke-width="1.1"/><line x1="9.05" y1="45.00" x2="4.55" y2="45.00" stroke="#141414" stroke-width="1.1"/><line x1="11.79" y1="58.76" x2="7.63" y2="60.48" stroke="#141414" stroke-width="1.1"/><line x1="20.11" y1="69.89" x2="15.87" y2="74.13" stroke="#141414" stroke-width="1.1"/><circle cx="45" cy="45" r="32" fill="url(#kg185)"/><circle cx="51.85" cy="24.41" r="5" fill="#4b6e2d" stroke="#3f5c26" stroke-width="0.8"/></svg><div class="grp" style="left:1159px;top:241px;width:202px;height:96px"></div><div class="p" style="left:1167px;top:235px">Время</div><svg class="a" style="left:1162.4px;top:244.60000000000002px" width="90" height="90"><defs><radialGradient id="kg289" cx="35%" cy="30%" r="75%"><stop offset="0" stop-color="#fbfbfb"/><stop offset="0.6" stop-color="#e6e6e6"/><stop offset="1" stop-color="#cfcfcf"/></radialGradient></defs><line x1="69.61" y1="69.61" x2="73.85" y2="73.85" stroke="#141414" stroke-width="1.1"/><line x1="74.33" y1="65.53" x2="77.60" y2="67.83" stroke="#141414" stroke-width="1.1"/><line x1="77.45" y1="60.13" x2="81.07" y2="61.82" stroke="#141414" stroke-width="1.1"/><line x1="78.61" y1="54.01" x2="84.41" y2="55.56" stroke="#141414" stroke-width="1.1"/><line x1="80.66" y1="48.12" x2="84.65" y2="48.47" stroke="#141414" stroke-width="1.1"/><line x1="80.66" y1="41.88" x2="84.65" y2="41.53" stroke="#141414" stroke-width="1.1"/><line x1="78.61" y1="35.99" x2="84.41" y2="34.44" stroke="#141414" stroke-width="1.1"/><line x1="77.45" y1="29.87" x2="81.07" y2="28.18" stroke="#141414" stroke-width="1.1"/><line x1="74.33" y1="24.47" x2="77.60" y2="22.17" stroke="#141414" stroke-width="1.1"/><line x1="69.61" y1="20.39" x2="73.85" y2="16.15" stroke="#141414" stroke-width="1.1"/><line x1="65.53" y1="15.67" x2="67.83" y2="12.40" stroke="#141414" stroke-width="1.1"/><line x1="60.13" y1="12.55" x2="61.82" y2="8.93" stroke="#141414" stroke-width="1.1"/><line x1="54.01" y1="11.39" x2="55.56" y2="5.59" stroke="#141414" stroke-width="1.1"/><line x1="48.12" y1="9.34" x2="48.47" y2="5.35" stroke="#141414" stroke-width="1.1"/><line x1="41.88" y1="9.34" x2="41.53" y2="5.35" stroke="#141414" stroke-width="1.1"/><line x1="35.99" y1="11.39" x2="34.44" y2="5.59" stroke="#141414" stroke-width="1.1"/><line x1="29.87" y1="12.55" x2="28.18" y2="8.93" stroke="#141414" stroke-width="1.1"/><line x1="24.47" y1="15.67" x2="22.17" y2="12.40" stroke="#141414" stroke-width="1.1"/><line x1="20.39" y1="20.39" x2="16.15" y2="16.15" stroke="#141414" stroke-width="1.1"/><line x1="15.67" y1="24.47" x2="12.40" y2="22.17" stroke="#141414" stroke-width="1.1"/><line x1="12.55" y1="29.87" x2="8.93" y2="28.18" stroke="#141414" stroke-width="1.1"/><line x1="11.39" y1="35.99" x2="5.59" y2="34.44" stroke="#141414" stroke-width="1.1"/><line x1="9.34" y1="41.88" x2="5.35" y2="41.53" stroke="#141414" stroke-width="1.1"/><line x1="9.34" y1="48.12" x2="5.35" y2="48.47" stroke="#141414" stroke-width="1.1"/><line x1="11.39" y1="54.01" x2="5.59" y2="55.56" stroke="#141414" stroke-width="1.1"/><line x1="12.55" y1="60.13" x2="8.93" y2="61.82" stroke="#141414" stroke-width="1.1"/><line x1="15.67" y1="65.53" x2="12.40" y2="67.83" stroke="#141414" stroke-width="1.1"/><line x1="20.39" y1="69.61" x2="16.15" y2="73.85" stroke="#141414" stroke-width="1.1"/><circle cx="45" cy="45" r="31.6" fill="url(#kg289)"/><circle cx="27.67" cy="31.94" r="5" fill="#4b6e2d" stroke="#3f5c26" stroke-width="0.8"/></svg><div class="cmb" style="left:1289px;top:252px;width:69px;height:21px;line-height:19px;padding-left:3px;border-radius:0;border-color:#5a5a5a #8a8a8a #8a8a8a #5a5a5a">5нас</div><div class="arr" style="left:1346px;top:261px"></div><div class="btn" style="left:1297px;top:305px;width:60px;height:21px;line-height:19px;text-align:left;padding-left:9px">Еще</div><div class="arr" style="left:1341px;top:314px;border-top-color:#6a6a6a;border-left-width:5px;border-right-width:5px;border-top-width:5px"></div><div class="grp" style="left:1159px;top:346px;width:202px;height:164px"></div><div class="p" style="left:1165px;top:364px">Режим тг.</div><div class="a" style="left:1165px;top:389px;width:70px;height:19px;overflow:hidden"><div class="p" style="left:0;top:0">Источник<br>тг.</div></div><div class="p" style="left:1165px;top:414px">Стиль тг.</div><div class="p" style="left:1165px;top:442px">Уровень тг.</div><div class="cmb" style="left:1234px;top:359px;width:122px;height:21px;line-height:19px;padding-left:3px;border-radius:0;border-color:#5a5a5a #8a8a8a #8a8a8a #5a5a5a">Авто</div><div class="arr" style="left:1344px;top:368px"></div><div class="cmb" style="left:1234px;top:384px;width:122px;height:21px;line-height:19px;padding-left:3px;border-radius:0;border-color:#5a5a5a #8a8a8a #8a8a8a #5a5a5a">CH1</div><div class="arr" style="left:1344px;top:393px"></div><div class="cmb" style="left:1234px;top:407px;width:122px;height:21px;line-height:19px;padding-left:3px;border-radius:0;border-color:#5a5a5a #8a8a8a #8a8a8a #5a5a5a">поднимать­ся край</div><div class="arr" style="left:1344px;top:416px"></div><div class="a" style="left:1235px;top:440px;width:72px;height:19px;background:#fff;border:1px solid #a9c1dc"></div><div class="p" style="left:1235px;top:444px;width:65px;text-align:right;font-size:11px;letter-spacing:0.1px"><span style="color:#7d7676">0 00</span>6.923</div><div class="cmb" style="left:1309px;top:439px;width:47px;height:21px;line-height:19px;padding-left:3px;padding-left:2px">В</div><div class="arr" style="left:1344px;top:448px"></div><div class="a" style="left:1166px;top:479px;width:96px;height:21px;border:1px solid #adb2b5;border-radius:3px;background:#f4f4f4;font-size:11px;line-height:20px;letter-spacing:0.25px;text-align:center;color:#7f7f7f">Принудительно</div><div class="btn" style="left:1294px;top:479px;width:62px;height:22px;line-height:20px;text-align:left;padding-left:9px">Еще</div><div class="arr" style="left:1340px;top:488px;border-top-color:#6a6a6a;border-left-width:5px;border-right-width:5px;border-top-width:5px"></div></body></html>
